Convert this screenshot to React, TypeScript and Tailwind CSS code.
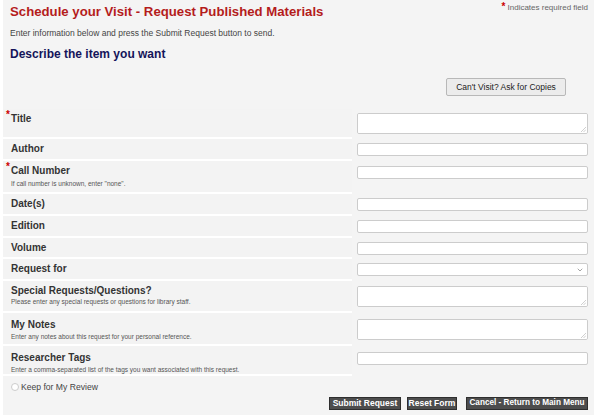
import { ChevronDown } from "lucide-react";

type Row = {
  label: string;
  hint?: string;
  required?: boolean;
  kind: "input" | "textarea" | "select";
  h: string;
  pt: string;
  hintMt?: string;
  inputMt: string;
};

const rows: Row[] = [
  { label: "Title", required: true, kind: "textarea", h: "h-[30px]", pt: "pt-[4px]", inputMt: "mt-[4px]" },
  { label: "Author", kind: "input", h: "h-[22px]", pt: "pt-[4px]", inputMt: "mt-[4px]" },
  {
    label: "Call Number",
    required: true,
    hint: 'If call number is unknown, enter "none".',
    kind: "input",
    h: "h-[33px]",
    pt: "pt-[4px]",
    hintMt: "mt-[3px]",
    inputMt: "mt-[5px]",
  },
  { label: "Date(s)", kind: "input", h: "h-[22px]", pt: "pt-[4px]", inputMt: "mt-[4px]" },
  { label: "Edition", kind: "input", h: "h-[22px]", pt: "pt-[4px]", inputMt: "mt-[4px]" },
  { label: "Volume", kind: "input", h: "h-[21px]", pt: "pt-[4px]", inputMt: "mt-[4px]" },
  { label: "Request for", kind: "select", h: "h-[22px]", pt: "pt-[4px]", inputMt: "mt-[4px]" },
  {
    label: "Special Requests/Questions?",
    hint: "Please enter any special requests or questions for library staff.",
    kind: "textarea",
    h: "h-[32px]",
    pt: "pt-[4px]",
    hintMt: "mt-[1px]",
    inputMt: "mt-[5px]",
  },
  {
    label: "My Notes",
    hint: "Enter any notes about this request for your personal reference.",
    kind: "textarea",
    h: "h-[33px]",
    pt: "pt-[6px]",
    hintMt: "mt-[2px]",
    inputMt: "mt-[6px]",
  },
  {
    label: "Researcher Tags",
    hint: "Enter a comma-separated list of the tags you want associated with this request.",
    kind: "input",
    h: "h-[30px]",
    pt: "pt-[6px]",
    hintMt: "mt-[2px]",
    inputMt: "mt-[6px]",
  },
];

const Field = ({ kind }: { kind: Row["kind"] }) => {
  if (kind === "textarea") {
    return (
      <div className="relative">
        <textarea className="block w-[231px] h-[21px] bg-white border border-[#cccccc] rounded-[2px] resize-none" />
        {/* faint resize grip */}
        <svg width="5" height="5" viewBox="0 0 5 5" className="absolute right-[2px] bottom-[2px]">
          <path d="M5 0 L0 5 M5 2.5 L2.5 5" stroke="#c4c4c4" strokeWidth="0.8" />
        </svg>
      </div>
    );
  }
  if (kind === "select") {
    return (
      <div className="w-[231px] h-[13px] bg-white border border-[#cccccc] rounded-[2px] flex items-center justify-end pr-[3px]">
        <ChevronDown size={8} strokeWidth={2} className="text-[#777]" />
      </div>
    );
  }
  return <input className="block w-[231px] h-[13px] bg-white border border-[#cccccc] rounded-[2px]" />;
};

const App = () => {
  return (
    <div className="w-[600px] h-[419px] bg-white font-['Liberation_Sans',Arial,sans-serif] overflow-hidden">
      <div className="ml-[3px] w-[591px] h-[415px] bg-[#f4f4f4]">
        {/* header */}
        <div className="flex justify-between items-start pl-[7px] pr-[6px] pt-[2px]">
          <h1 className="mt-[2px] text-[13.2px] leading-[16px] font-bold text-[#b41c1c]">
            Schedule your Visit - Request Published Materials
          </h1>
          <p className="text-[8px] leading-[10px] text-[#666]">
            <span className="text-[#c00] text-[10px] font-bold">*</span> Indicates required field
          </p>
        </div>
        <p className="pl-[7px] mt-[8px] text-[8.5px] leading-[11px] text-[#444]">
          Enter information below and press the Submit Request button to send.
        </p>
        <h2 className="pl-[7px] mt-[8px] text-[12px] leading-[15px] font-bold text-[#14145a]">
          Describe the item you want
        </h2>
        <div className="flex justify-end pr-[28px] mt-[16px]">
          <button className="w-[120px] h-[18px] bg-[#ececec] border border-[#b8b8b8] rounded-[2px] text-[8.5px] text-[#222]">
            Can't Visit? Ask for Copies
          </button>
        </div>

        {/* form rows */}
        <div className="mt-[13px]">
          {rows.map((row, index) => (
            <div key={index} className="flex">
              <div className={`w-[349px] ${row.h} ${row.pt} pl-[8px] border-b-2 border-white bg-[#f3f3f3]`}>
                <p className="relative text-[10px] leading-[12px] font-bold text-[#333]">
                  {row.required && (
                    <span className="absolute -left-[5px] -top-[4px] text-[10px] text-[#c00]">*</span>
                  )}
                  {row.label}
                </p>
                {row.hint && (
                  <p className={`${row.hintMt} text-[6.5px] leading-[8px] text-[#555]`}>{row.hint}</p>
                )}
              </div>
              <div className={`ml-[5px] ${row.inputMt}`}>
                <Field kind={row.kind} />
              </div>
            </div>
          ))}
        </div>

        {/* keep for review */}
        <label className="mt-[5px] pl-[8px] flex items-center gap-[2px] text-[8.6px] leading-[12px] text-[#444]">
          <span className="w-[8px] h-[8px] rounded-full border border-[#cccccc] bg-white" />
          Keep for My Review
        </label>

        {/* actions */}
        <div className="mt-[4px] flex justify-end pr-[6px]">
          <button className="w-[72px] h-[13px] bg-[#4d4d4d] border border-[#2e2e2e] text-white text-[8.5px] leading-none font-bold">
            Submit Request
          </button>
          <button className="ml-[6px] w-[50px] h-[13px] bg-[#4d4d4d] border border-[#2e2e2e] text-white text-[8.5px] leading-none font-bold">
            Reset Form
          </button>
          <button className="ml-[9px] w-[122px] h-[13px] bg-[#4d4d4d] border border-[#2e2e2e] text-white text-[8.2px] leading-none font-bold">
            Cancel - Return to Main Menu
          </button>
        </div>
      </div>
    </div>
  );
};

export default App;
